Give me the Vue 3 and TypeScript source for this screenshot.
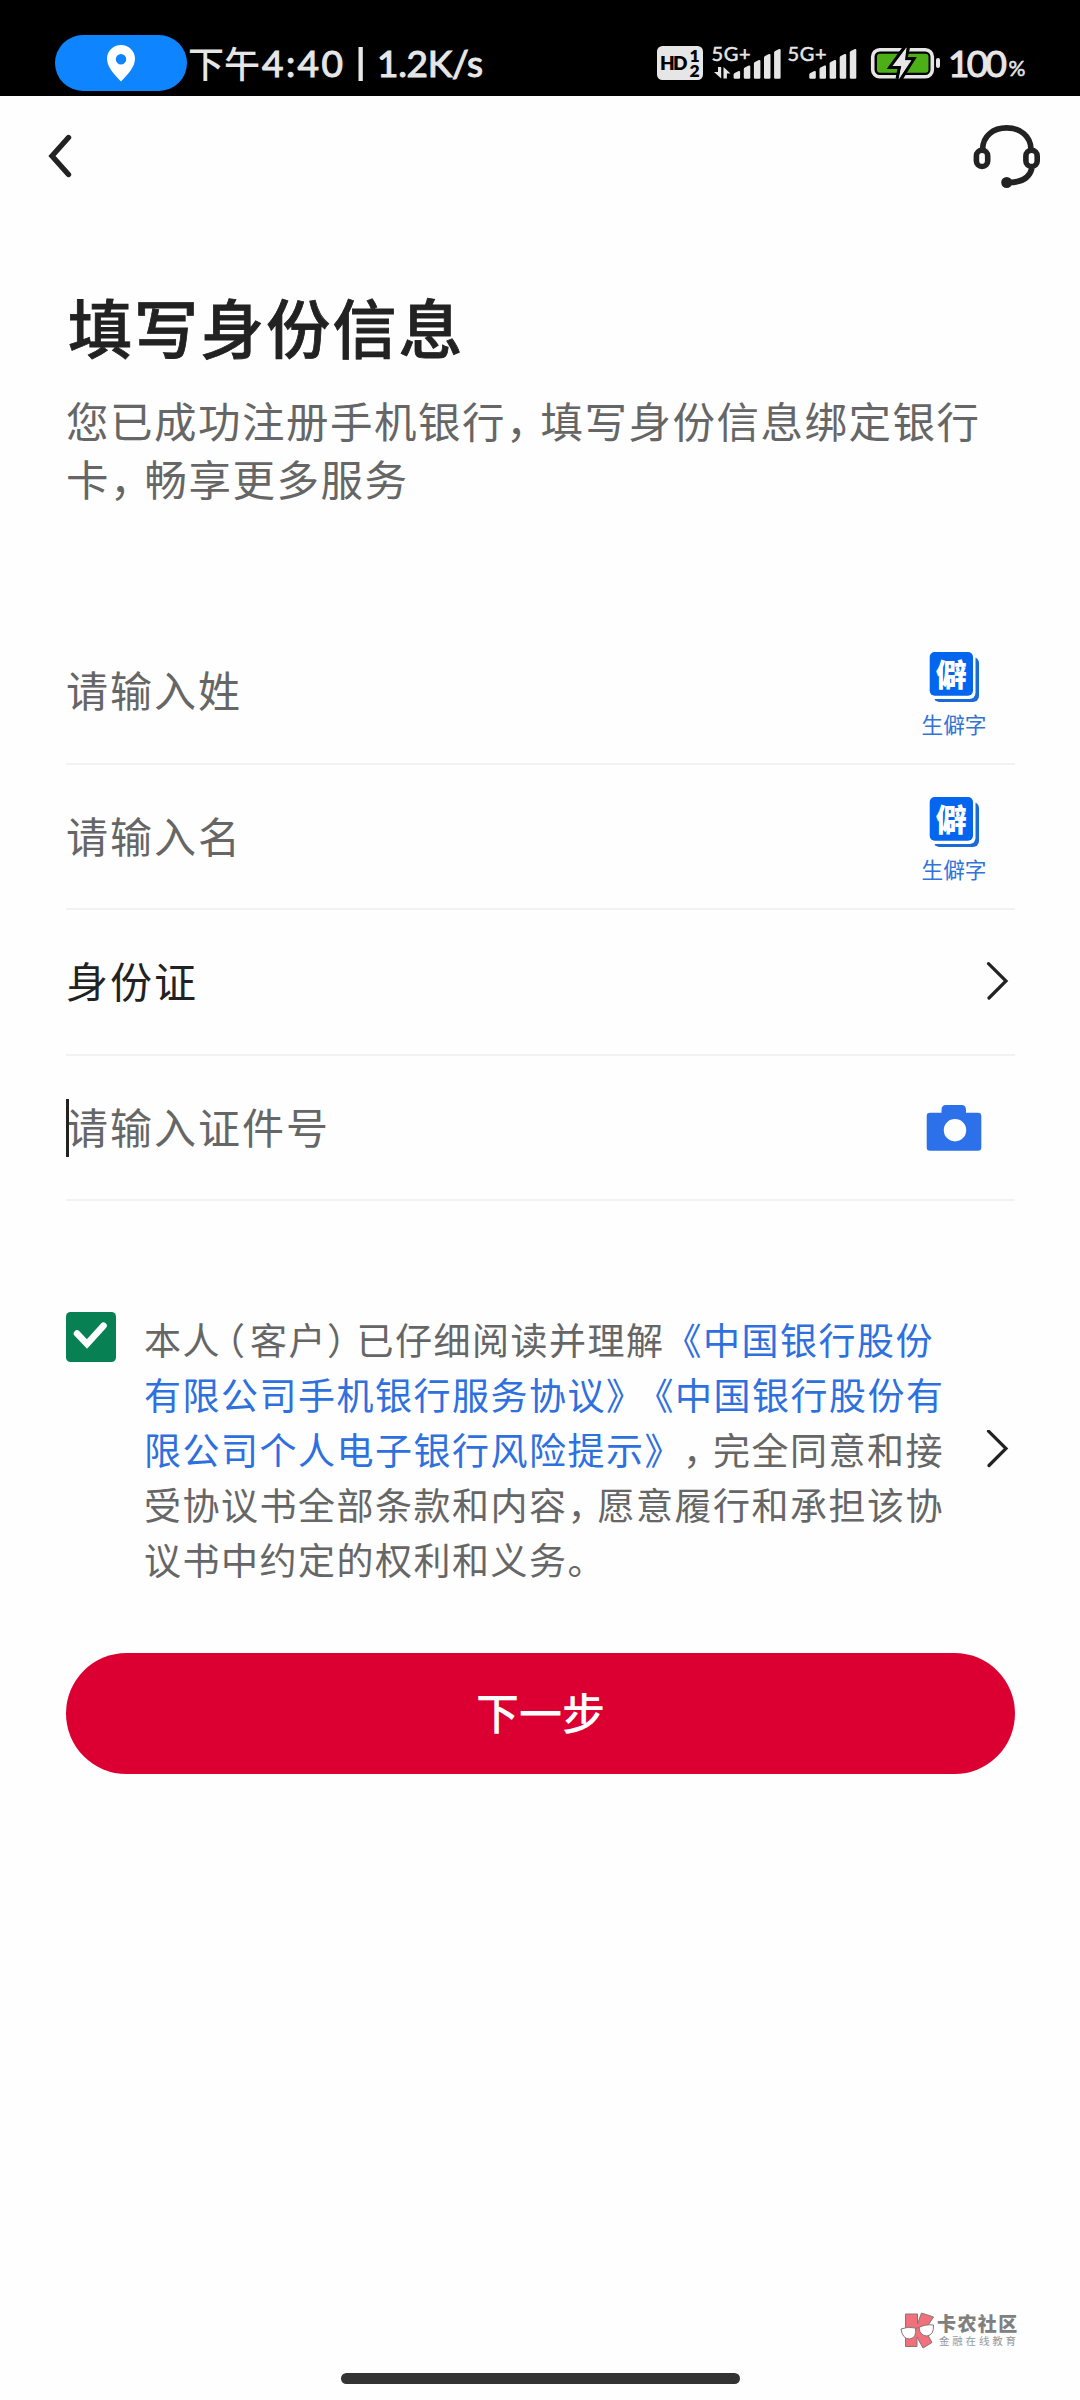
<script setup lang="ts">
interface Segment {
  text: string
  kind?: 'link' | 'comma' | 'open' | 'close' | 'link-tight'
}

interface Field {
  label: string
  filled?: boolean
  focused?: boolean
  action: 'rare' | 'arrow' | 'camera'
}

const fields: Field[] = [
  { label: '请输入姓', action: 'rare' },
  { label: '请输入名', action: 'rare' },
  { label: '身份证', filled: true, action: 'arrow' },
  { label: '请输入证件号', focused: true, action: 'camera' },
]

const intro: Segment[][] = [
  [{ text: '您已成功注册手机银行' }, { text: '，', kind: 'comma' }, { text: '填写身份信息绑定银行' }],
  [{ text: '卡' }, { text: '，', kind: 'comma' }, { text: '畅享更多服务' }],
]

const agreement: Segment[][] = [
  [
    { text: '本人' },
    { text: '（', kind: 'open' },
    { text: '客户' },
    { text: '）', kind: 'close' },
    { text: '已仔细阅读并理解' },
    { text: '《中国银行股份', kind: 'link' },
  ],
  [
    { text: '有限公司手机银行服务协议', kind: 'link' },
    { text: '》', kind: 'link-tight' },
    { text: '《中国银行股份有', kind: 'link' },
  ],
  [
    { text: '限公司个人电子银行风险提示》', kind: 'link' },
    { text: '，', kind: 'comma' },
    { text: '完全同意和接' },
  ],
  [{ text: '受协议书全部条款和内容' }, { text: '，', kind: 'comma' }, { text: '愿意履行和承担该协' }],
  [{ text: '议书中约定的权利和义务。' }],
]

// Signal bars: left edge and top of each bar within one antenna group
const bars = [
  { x: 0, y: 71 },
  { x: 10.2, y: 65.5 },
  { x: 20.3, y: 60 },
  { x: 30.4, y: 54 },
  { x: 40.5, y: 49 },
]
</script>

<template>
  <div class="screen">
    <header class="status">
      <div class="pill">
        <svg width="28" height="38" viewBox="0 0 28 38">
          <path fill="#fff" fill-rule="evenodd" d="M14 1C6.300 1 0 7 0 14.500C0 23 7 30 14 37.500C21 30 28 23 28 14.500C28 7 21.700 1 14 1ZM14 10a5.200 5.200 0 1 1 0 10.400a5.200 5.200 0 1 1 0-10.400Z" />
        </svg>
      </div>
      <svg class="clock" width="310" height="96" viewBox="187 0 310 96">
        <text class="st cjk" x="188" y="78" font-size="36" textLength="72">下午</text>
        <text class="st" x="262" y="77" font-size="37" textLength="81">4:40</text>
        <rect x="358.500" y="47" width="4.300" height="34" fill="#e6e6e6" />
        <text class="st" x="377" y="77" font-size="37" textLength="106">1.2K/s</text>
      </svg>
      <svg class="indicators" width="390" height="96" viewBox="650 0 390 96">
        <rect x="657" y="46" width="46" height="34" rx="5.500" fill="#e6e6e6" />
        <text class="hd" x="660" y="70" font-size="19" textLength="27.500">HD</text>
        <text class="hd" x="689.500" y="62" font-size="17.500">1</text>
        <text class="hd" x="689.500" y="76.500" font-size="17.500">2</text>
        <text class="st small" x="711.500" y="61" font-size="20" textLength="39">5G+</text>
        <text class="st small" x="787.500" y="61" font-size="20" textLength="39">5G+</text>
        <path fill="#e6e6e6" d="M718 67h3.200v11.500L714 72h4ZM723.500 78.500V67l7 6.500h-3.600v5Z" />
        <g v-for="offset in [733.600, 809.300]" :key="offset" fill="#e6e6e6">
          <path
            v-for="bar in bars"
            :key="bar.x"
            :d="`M${offset + bar.x} ${bar.y + 3.500}q0-1 1-1.500l4-2q1.500-.5 1.500 1V77.500q0 1.300-1.300 1.300h-3.900q-1.300 0-1.300-1.300Z`"
          />
        </g>
        <rect x="872.700" y="49.700" width="59.600" height="27" rx="7" fill="none" stroke="#e6e6e6" stroke-width="3.600" />
        <rect x="877" y="53.700" width="51.500" height="19" rx="3" fill="#4caf17" />
        <rect x="936" y="58" width="4" height="10" rx="2" fill="#e6e6e6" />
        <path fill="#e6e6e6" stroke="#000" stroke-width="7" paint-order="stroke" d="M906.500 47.500L893.500 65.500h8.200L899 79L910.500 60.500h-7Z" />
        <path fill="#e6e6e6" d="M906.500 47.500L892.500 66h8.800L898.500 79.500L911.500 60.300h-6.500Z" />
        <text class="st" x="948" y="77" font-size="37" textLength="59">100</text>
        <text class="st small" x="1008.500" y="76" font-size="21" textLength="17" lengthAdjust="spacingAndGlyphs">%</text>
      </svg>
    </header>

    <nav class="nav">
      <svg width="26" height="44" viewBox="0 0 26 44" fill="none" stroke="#222" stroke-width="5.400" stroke-linecap="round">
        <path d="M21.500 3.500L5 22L21.500 40.500" />
      </svg>
      <svg width="70" height="68" viewBox="972 122 70 68" fill="none" stroke="#222" stroke-width="5.600">
        <path d="M982.600 149C983 136 993 127.900 1006.700 127.900S1030.500 136 1031 149" />
        <rect x="976.400" y="150.300" width="11.300" height="16.200" rx="5.600" />
        <rect x="1025.900" y="150.300" width="11.300" height="16.200" rx="5.600" />
        <path d="M1032 168C1029.500 178 1021 183 1007 182.500" />
        <circle cx="1006.700" cy="182.500" r="5.500" fill="#222" stroke="none" />
      </svg>
    </nav>

    <main class="content">
      <h1>填写身份信息</h1>
      <div class="intro">
        <p v-for="(line, i) in intro" :key="i"><span v-for="(s, j) in line" :key="j" :class="s.kind">{{ s.text }}</span></p>
      </div>

      <section class="form">
        <div v-for="f in fields" :key="f.label" class="field">
          <span class="label" :class="{ filled: f.filled }">{{ f.label }}<i v-if="f.focused" class="caret" /></span>
          <div v-if="f.action === 'rare'" class="rare">
            <svg width="52" height="52" viewBox="0 0 52 52">
              <rect x="5.500" y="6" width="45.500" height="45" rx="6" fill="#1b6bd6" />
              <rect x="-1" y="-1" width="48.500" height="49" rx="6" fill="#fff" />
              <rect x="1.700" y="1" width="43.300" height="43.700" rx="5" fill="#0466ee" />
              <text class="glyph" x="23.300" y="34.500" font-size="31" text-anchor="middle">僻</text>
            </svg>
            <span>生僻字</span>
          </div>
          <svg v-else-if="f.action === 'arrow'" class="arrow" width="24" height="40" viewBox="0 0 24 40">
            <path d="M3.500 1.700L21 19L4 36" />
          </svg>
          <svg v-else class="camera" width="56" height="46" viewBox="0 0 56 46">
            <path fill="#2d71ea" fill-rule="evenodd" d="M4 7.700H15.500V5Q15.500 0 20 0H35.500Q40 0 40 5V7.700H52Q55.300 7.700 55.300 11V42.500Q55.300 45.700 52 45.700H4Q.7 45.700.7 42.500V11Q.7 7.700 4 7.700ZM29 14a11.200 11.200 0 1 0 0 22.400a11.200 11.200 0 1 0 0-22.400Z" />
          </svg>
        </div>
      </section>

      <section class="agreement">
        <svg class="check" width="50" height="50" viewBox="0 0 50 50">
          <rect width="50" height="50" rx="4.500" fill="#078154" />
          <path d="M11 21.500L21 32L37.500 13.700" fill="none" stroke="#fff" stroke-width="6.500" stroke-linecap="round" />
        </svg>
        <div class="terms">
          <p v-for="(line, i) in agreement" :key="i"><span v-for="(s, j) in line" :key="j" :class="s.kind">{{ s.text }}</span></p>
        </div>
        <svg class="arrow" width="24" height="40" viewBox="0 0 24 40">
          <path d="M3.500 .7L21 18L4 35" transform="translate(0 .5)" />
        </svg>
      </section>

      <button class="next" type="button">下一步</button>
    </main>

    <footer class="footer">
      <div class="brand">
        <svg width="35" height="37" viewBox="0 0 35 37" stroke="#8b7478" stroke-width="1">
          <path fill="#f0707c" d="M5.500 2H17.500V12L21.500 1L33.500 5L25 18L32 30.500L23 36L17 25V34.500H5.500Z" />
          <path fill="#fff" d="M1 17Q8 14 15.500 16Q17 26 9.500 27Q2.500 27 1 17ZM19 15.500Q25 12 33.500 13Q34 23 27 24Q20 24 19 15.500Z" />
          <path fill="none" d="M15.500 17Q17 15 19 16" />
        </svg>
        <div class="brand-text">
          <strong>卡农社区</strong>
          <small>金融在线教育</small>
        </div>
      </div>
      <div class="home-bar" />
    </footer>
  </div>
</template>

<style>
body {
  margin: 0;
  background: #fefefe;
}
</style>

<style scoped>
.screen {
  display: flex;
  flex-direction: column;
  width: 1080px;
  height: 2400px;
  overflow: hidden;
  background: #fefefe;
  color: #222;
  font-family: 'Noto Sans CJK SC', 'Noto Sans', sans-serif;
  text-spacing-trim: space-all;
}

svg {
  display: block;
  flex: none;
}

p,
h1 {
  margin: 0;
  white-space: nowrap;
}

.status {
  display: flex;
  flex: none;
  height: 96px;
  padding-left: 55px;
  background: #000;
}

.pill {
  display: flex;
  align-items: center;
  justify-content: center;
  width: 132px;
  height: 56px;
  margin-top: 35px;
  border-radius: 28px;
  background: #0e85ff;
}

.indicators {
  margin-left: 153px;
}

.st {
  fill: #e6e6e6;
  stroke: #e6e6e6;
  stroke-width: 1.1px;
  font-family: Lato, 'Noto Sans CJK SC', sans-serif;
}

.st.cjk {
  stroke: none;
  font-weight: 500;
}

.st.small {
  stroke-width: 0.5px;
}

.hd {
  fill: #000;
  font-family: Lato, sans-serif;
  font-weight: 800;
}

.nav {
  display: flex;
  flex: none;
  align-items: center;
  justify-content: space-between;
  height: 120px;
  padding: 0 38px 0 47px;
}

.content {
  display: flex;
  flex-direction: column;
  width: 949px;
  margin-left: 66px;
}

h1 {
  margin: 69px 0 0 2px;
  font-size: 64px;
  font-weight: 500;
  line-height: 80px;
  letter-spacing: 2.1px;
  -webkit-text-stroke: 0.8px #222;
}

.intro {
  margin-top: 26px;
  color: #666;
  font-size: 42.5px;
  line-height: 58px;
  letter-spacing: 1.5px;
}

.comma,
.open,
.close,
.link-tight {
  font-feature-settings: 'halt';
}

.intro .comma {
  margin-right: 11.75px;
}

.form {
  margin-top: 112px;
}

.field {
  display: flex;
  box-sizing: border-box;
  align-items: center;
  justify-content: space-between;
  height: 145.6px;
  border-bottom: 2px solid #f2f2f2;
}

.label {
  position: relative;
  margin-bottom: 3px;
  color: #666;
  font-size: 42px;
  line-height: 58px;
  letter-spacing: 2px;
}

.label.filled {
  color: #222;
}

.caret {
  position: absolute;
  top: 2px;
  left: 0;
  width: 3px;
  height: 58px;
  background: #222;
}

.rare {
  display: flex;
  flex-direction: column;
  align-items: center;
  width: 66px;
  margin-right: 28px;
  padding-top: 9px;
  color: #3273d8;
  font-size: 21.7px;
  line-height: 32px;
}

.rare span {
  margin-top: 5px;
}

.glyph {
  fill: #fff;
  font-weight: 900;
}

.arrow {
  margin-right: 6px;
  fill: none;
  stroke: #222;
  stroke-width: 3.2;
  stroke-linecap: round;
}

.camera {
  margin-right: 33px;
}

.agreement {
  display: flex;
  align-items: center;
  margin-top: 111px;
}

.check {
  align-self: flex-start;
}

.terms {
  flex: 1;
  margin-left: 28px;
  color: #666;
  font-size: 37px;
  line-height: 55px;
  letter-spacing: 1.5px;
}

.terms .comma {
  margin-right: 10px;
}

.terms .open {
  margin: 0 3.5px 0 5.5px;
}

.terms .close {
  margin-right: 9.5px;
}

.link,
.link-tight {
  color: #2e70de;
}

.link-tight {
  margin-right: 10.5px;
}

.next {
  height: 121px;
  margin-top: 66px;
  padding: 0 0 4px;
  border: 0;
  border-radius: 61px;
  background: #dc0032;
  color: #fff;
  font-family: inherit;
  font-size: 43px;
  font-weight: 500;
  line-height: 117px;
}

.footer {
  display: flex;
  flex-direction: column;
  align-items: center;
  margin-top: auto;
  padding-bottom: 16px;
}

.brand {
  display: flex;
  align-self: flex-end;
  gap: 2px;
  margin-right: 61px;
}

.brand-text {
  display: flex;
  flex-direction: column;
  width: 82px;
  color: #808080;
}

.brand-text strong {
  font-size: 19px;
  font-weight: 900;
  line-height: 22px;
  letter-spacing: 1.4px;
}

.brand-text small {
  margin-left: 2px;
  color: #999;
  font-size: 10.5px;
  line-height: 14px;
  letter-spacing: 2.8px;
}

.home-bar {
  width: 399px;
  height: 11px;
  margin-top: 24px;
  border-radius: 6px;
  background: #333;
}
</style>
